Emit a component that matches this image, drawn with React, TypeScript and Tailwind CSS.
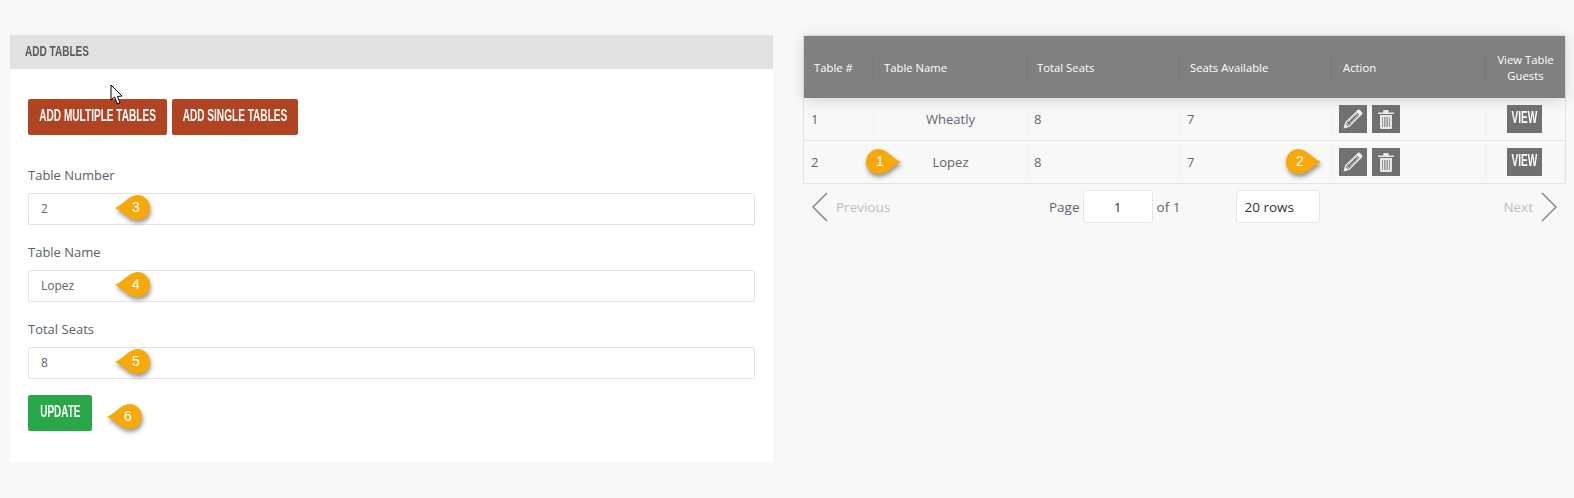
import React from 'react';

const BODY = { fontFamily: '"Open Sans", "Noto Sans", sans-serif' };
const DISPLAY = { fontFamily: '"Liberation Sans", sans-serif' };

function Marker({ n, dir, className }: { n: number; dir: 'left' | 'right'; className: string }) {
  return (
    <span className={`absolute w-[36px] h-[27px] ${className}`}>
      <svg width="36" height="27" viewBox="0 0 36 27" className="absolute left-0 top-0 overflow-visible drop-shadow-[1px_3px_2px_rgba(0,0,0,0.4)]">
        {dir === 'left' ? (
          <path d="M0 13 C8 10 13 1 22 0 C30 0 35 6 35 13 C35 20 30 25 22 25 C13 25 8 16 0 13 Z" fill="#f7a90a" />
        ) : (
          <path d="M35 13 C27 10 22 1 13 0 C5 0 0 6 0 13 C0 20 5 25 13 25 C22 25 27 16 35 13 Z" fill="#f7a90a" />
        )}
      </svg>
      <span
        className={`absolute top-[2px] text-white text-[14px] leading-[20px] ${dir === 'left' ? 'left-[17px]' : 'left-[10px]'}`}
        style={{ fontFamily: '"Liberation Sans", sans-serif' }}
      >
        {n}
      </span>
    </span>
  );
}

function Field({ label, value, marker }: { label: string; value: string; marker: number }) {
  return (
    <div className="mb-[18px]">
      <div className="text-[13px] leading-[18px] text-[#5a5f68] mb-[9px]">{label}</div>
      <div className="relative h-[32px] border border-[#e3e3e3] rounded-[2px] bg-white flex items-center pl-[12px] text-[12px] text-[#62646e]">
        {value}
        <Marker n={marker} dir="left" className="left-[86px] top-[1px]" />
      </div>
    </div>
  );
}

// bebas-like label: bold caps squeezed horizontally, no condensed face is installed
function Squeezed({ className, children }: { className: string; children: string }) {
  return (
    <span className={`inline-block shrink-0 whitespace-nowrap font-bold ${className}`} style={DISPLAY}>
      {children}
    </span>
  );
}

function RedButton({ width, children }: { width: string; children: string }) {
  return (
    <span className={`${width} h-[36px] bg-[#b04322] rounded-[2px] flex items-center justify-center overflow-hidden`}>
      <Squeezed className="text-white text-[16px] mb-[2px] scale-x-[0.63]">{children}</Squeezed>
    </span>
  );
}

function PencilIcon() {
  return (
    <svg width="20" height="20" viewBox="0 0 20 20" fill="none" stroke="#eeeeee" strokeWidth="1.2">
      <path d="M1.5 18.5 L3 13 L14 2.5 L17.5 6 L6.5 17 Z" />
      <path d="M3 13 L6.5 17 M12.5 4 L16 7.5 M5 13 L13.5 4.5 M7 14.5 L15 6.5" strokeWidth="0.9" />
      <path d="M15 1.5 L16 1 L19 4 L18.5 5 L17.5 6 L14 2.5 Z" fill="#eeeeee" />
      <path d="M1.5 18.5 L2.3 15.5 L4.5 17.7 Z" fill="#eeeeee" />
    </svg>
  );
}

function TrashIcon() {
  return (
    <svg width="16" height="20" viewBox="0 0 16 20">
      <path d="M0 3.5 H16 V5 H0 Z M5 3.5 L5.6 1 H10.4 L11 3.5 Z" fill="#e8e8e8" />
      <path d="M2 6 H14 V18.5 C14 19.3 13.5 20 12.7 20 H3.3 C2.5 20 2 19.3 2 18.5 Z" fill="#e8e8e8" />
      <path d="M4.5 8 V18 M6.5 8 V18 M8 8 V18 M9.5 8 V18 M11.5 8 V18" stroke="#8d8d8d" strokeWidth="0.9" />
    </svg>
  );
}

function Cell({ className, children }: { className: string; children?: React.ReactNode }) {
  return <div className={`h-[34px] flex items-center border-r border-[#efefef] last:border-r-0 ${className}`}>{children}</div>;
}

function ActionButton({ children }: { children: React.ReactNode }) {
  return <span className="w-[28px] h-[28px] bg-[#707070] flex items-center justify-center">{children}</span>;
}

function Row({ no, name, height, border, marker }: { no: string; name: string; height: string; border: boolean; marker: boolean }) {
  return (
    <div className={`relative flex items-center ${height} text-[13px] text-[#62646e] ${border ? 'border-b border-[#e6e6e6]' : ''}`}>
      <Cell className="w-[70px] pl-[7px] pt-[2px]">{no}</Cell>
      <Cell className="w-[154px] justify-center pt-[2px]">{name}</Cell>
      <Cell className="w-[152px] pl-[6px] pt-[2px]">8</Cell>
      <Cell className="w-[152px] pl-[7px] pt-[2px]">7</Cell>
      <Cell className="w-[154px] pl-[7px] gap-[5px]">
        <ActionButton><PencilIcon /></ActionButton>
        <ActionButton><TrashIcon /></ActionButton>
      </Cell>
      <Cell className="flex-1 pl-[21px]">
        <span className="w-[35px] h-[28px] bg-[#707070] flex items-center justify-center overflow-hidden">
          <Squeezed className="text-white text-[16px] mb-[3px] scale-x-[0.63]">VIEW</Squeezed>
        </span>
      </Cell>
      {marker && (
        <>
          <Marker n={1} dir="right" className="left-[62px] top-[8px]" />
          <Marker n={2} dir="right" className="left-[482px] top-[8px]" />
        </>
      )}
    </div>
  );
}

function HeaderCell({ className, children }: { className: string; children: React.ReactNode }) {
  return <div className={`h-[26px] flex items-center pt-[2px] border-r border-[#757575] last:border-r-0 ${className}`}>{children}</div>;
}

export default function App() {
  return (
    <div className="relative min-h-screen bg-[#f8f8f8] flex items-start pt-[35px] pl-[10px] gap-[30px]" style={BODY}>
      {/* add tables form */}
      <div className="w-[763px] h-[427px] bg-white rounded-b-[3px]">
        <div className="h-[34px] bg-[#e1e1e1] flex items-center pl-[15px]">
          <Squeezed className="text-[15px] text-[#5c5c5c] mb-[1px] origin-left scale-x-[0.67]">ADD TABLES</Squeezed>
        </div>
        <div className="pt-[30px] pl-[18px] pr-[18px]">
          <div className="flex gap-[5px] mb-[31px]">
            <RedButton width="w-[139px]">ADD MULTIPLE TABLES</RedButton>
            <RedButton width="w-[126px]">ADD SINGLE TABLES</RedButton>
          </div>
          <Field label="Table Number" value="2" marker={3} />
          <Field label="Table Name" value="Lopez" marker={4} />
          <Field label="Total Seats" value="8" marker={5} />
          <div className="relative -mt-[2px]">
            <span className="w-[64px] h-[36px] bg-[#28a848] rounded-[2px] flex items-center justify-center overflow-hidden">
              <Squeezed className="text-white text-[16px] mb-[2px] scale-x-[0.62]">UPDATE</Squeezed>
            </span>
            <Marker n={6} dir="left" className="left-[79px] top-[9px]" />
          </div>
        </div>
      </div>

      {/* table list */}
      <div className="w-[763px]">
        <div className="border border-[#e3e3e3]">
          <div className="h-[62px] bg-[#808080] flex items-center text-[11.3px] text-white shadow-[0_2px_15px_0_rgba(0,0,0,0.15)] relative">
            <HeaderCell className="w-[70px] pl-[10px]">Table #</HeaderCell>
            <HeaderCell className="w-[154px] pl-[10px]">Table Name</HeaderCell>
            <HeaderCell className="w-[152px] pl-[9px]">Total Seats</HeaderCell>
            <HeaderCell className="w-[152px] pl-[10px]">Seats Available</HeaderCell>
            <HeaderCell className="w-[154px] pl-[11px]">Action</HeaderCell>
            <HeaderCell className="flex-1 justify-center text-center leading-[16px]">View Table<br />Guests</HeaderCell>
          </div>
          <Row no="1" name="Wheatly" height="h-[43px]" border marker={false} />
          <Row no="2" name="Lopez" height="h-[42px]" border={false} marker />
        </div>
        <div className="flex items-center h-[33px] mt-[6px] text-[13.5px]">
          <div className="w-[246px] flex items-center pl-[8px] gap-[7px] text-[#bdbdbd]">
            <svg width="18" height="30" viewBox="0 0 18 30" fill="none" stroke="#808080" strokeWidth="1.4"><path d="M16 1 L2 15 L16 29" /></svg>
            <span className="pt-[2px]">Previous</span>
          </div>
          <div className="flex items-center text-[#5f6472]">
            <span className="pt-[2px]">Page</span>
            <span className="ml-[3px] mr-[4px] w-[70px] h-[33px] bg-white border border-[#e6e6e6] rounded-[3px] flex items-center justify-center pt-[2px] text-[#333333]">1</span>
            <span className="pt-[2px]">of 1</span>
            <span className="ml-[56px] w-[84px] h-[33px] bg-white border border-[#e6e6e6] rounded-[3px] flex items-center pl-[7px] pt-[2px] text-[#333333]">20 rows</span>
          </div>
          <div className="ml-auto flex items-center pr-[8px] gap-[7px] text-[#bdbdbd]">
            <span className="pt-[2px]">Next</span>
            <svg width="18" height="30" viewBox="0 0 18 30" fill="none" stroke="#808080" strokeWidth="1.4"><path d="M2 1 L16 15 L2 29" /></svg>
          </div>
        </div>
      </div>

      {/* mouse pointer caught in the capture */}
      <svg width="13" height="22" viewBox="0 0 13 22" className="absolute left-[110px] top-[84px]">
        <path d="M1 1 L1 16 L4.5 13 L7.5 20 L10 19 L7.5 12.5 L12 12 Z" fill="white" stroke="black" strokeWidth="1" />
      </svg>
    </div>
  );
}
